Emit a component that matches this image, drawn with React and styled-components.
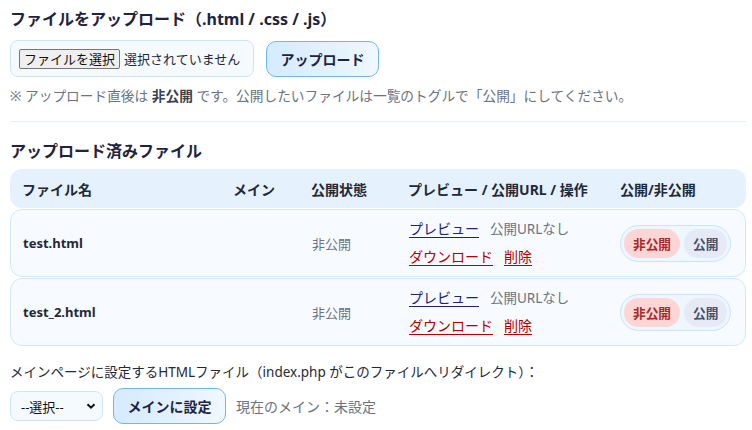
import React from "react";
import styled, { createGlobalStyle } from "styled-components";

const Global = createGlobalStyle`
  html, body { margin: 0; padding: 0; background: #fff; }
  body {
    font-family: "Noto Sans", "Noto Sans CJK JP", sans-serif;
    color: #1f2937;
  }
  * { box-sizing: border-box; }
`;

const Page = styled.div`
  padding: 7px 6px 0 10px;
  width: 752px;
`;

const Title = styled.h2`
  margin: 0;
  font-size: 16px;
  line-height: 24px;
  font-weight: 700;
  color: #1e2440;
`;

const SubTitle = styled.h3`
  margin: 0;
  font-size: 16px;
  line-height: 22px;
  font-weight: 700;
  color: #1e2440;
`;

const Row = styled.div`
  display: flex;
  align-items: center;
  gap: ${(p) => p.$gap || 12}px;
  margin-top: ${(p) => p.$mt || 0}px;
`;

const FileBox = styled.div`
  width: 244px;
  height: 37px;
  border: 1px solid #cde4fb;
  border-radius: 8px;
  background: #f5faff;
  display: flex;
  align-items: center;
  padding: 0 8px;
  gap: 4px;
  font-size: 13px;
  color: #1f2937;
`;

const NativeBtn = styled.span`
  display: inline-flex;
  align-items: center;
  height: 20px;
  padding: 0 4px;
  border: 1px solid #767676;
  border-radius: 2px;
  background: #efefef;
  font-size: 13px;
  color: #111;
`;

const PrimaryBtn = styled.button`
  height: ${(p) => p.$h || 36}px;
  width: ${(p) => p.$w}px;
  border: 1px solid #74b4f2;
  border-radius: 10px;
  background: linear-gradient(90deg, #d5ebff 0%, #e6f3ff 70%, #f1f8ff 100%);
  font-family: inherit;
  font-size: 14px;
  font-weight: 700;
  color: #1e2440;
  cursor: pointer;
`;

const Note = styled.p`
  margin: 10px 0 0;
  font-size: 13.7px;
  line-height: 18px;
  color: #6b7280;
  strong { color: #374151; font-weight: 700; }
`;

const Divider = styled.hr`
  border: 0;
  border-top: 1px solid #e2eefb;
  margin: 16px 0 18px;
  width: 736px;
`;

const Table = styled.div`
  margin-top: 7px;
  width: 736px;
  display: flex;
  flex-direction: column;
  gap: 1px;
`;

const cols = "211px 78px 97px 212px 1fr";

const HeadRow = styled.div`
  display: grid;
  grid-template-columns: ${cols};
  align-items: center;
  height: 39px;
  background: #e6f1fe;
  border-radius: 12px;
  font-size: 14px;
  font-weight: 700;
  color: #1e2440;
`;

const BodyRow = styled.div`
  display: grid;
  grid-template-columns: ${cols};
  align-items: center;
  height: 68px;
  background: #f7fbff;
  border: 1px solid #d3e7fb;
  border-radius: 12px;
  font-size: 13px;
`;

const Cell = styled.div`
  padding: 0 12px;
  color: ${(p) => (p.$muted ? "#6b7280" : "#1f2937")};
  font-weight: ${(p) => (p.$bold ? 700 : 400)};
`;

const Actions = styled.div`
  padding: 0 12px;
  display: flex;
  flex-direction: column;
  gap: 6px;
  font-size: 14px;
  line-height: 22px;
`;

const ActionLine = styled.div`
  display: flex;
  gap: 11px;
  align-items: center;
`;

const Link = styled.a`
  color: ${(p) => (p.$danger ? "#b00000" : "#1c2378")};
  text-decoration: underline;
  text-underline-offset: 3px;
  cursor: pointer;
`;

const Muted = styled.span`
  color: #6b7280;
  font-size: 13.5px;
`;

const Toggle = styled.div`
  margin-left: -1px;
  display: inline-flex;
  align-items: center;
  gap: 4px;
  padding: 3px;
  border: 1px solid #cbe3fb;
  border-radius: 999px;
  background: #eef6ff;
`;

const Pill = styled.span`
  display: inline-flex;
  align-items: center;
  justify-content: center;
  height: 29px;
  padding: 0 9px;
  border-radius: 999px;
  font-size: 12.7px;
  font-weight: 700;
  background: ${(p) => (p.$on ? "#fdd5d5" : "#e6eaf7")};
  color: ${(p) => (p.$on ? "#a52a2a" : "#4a4f6a")};
`;

const Label = styled.p`
  margin: 16px 0 0;
  font-size: 13.5px;
  line-height: 20px;
  color: #1f2937;
`;

const SelectBox = styled.div`
  width: 93px;
  height: 30px;
  border: 1px solid #cde4fb;
  border-radius: 8px;
  background: #f5faff;
  display: flex;
  align-items: center;
  justify-content: space-between;
  padding: 0 6px 0 10px;
  font-size: 13px;
  color: #111;
`;

const Current = styled.span`
  font-size: 14px;
  color: #6b7280;
`;

const files = ["test.html", "test_2.html"];

export default function App() {
  return (
    <>
      <Global />
      <Page>
        <Title>ファイルをアップロード（.html / .css / .js）</Title>
        <Row $mt={9} $gap={12}>
          <FileBox>
            <NativeBtn>ファイルを選択</NativeBtn>
            <span>選択されていません</span>
          </FileBox>
          <PrimaryBtn $w={113}>アップロード</PrimaryBtn>
        </Row>
        <Note>
          ※ アップロード直後は <strong>非公開</strong> です。公開したいファイルは一覧のトグルで「公開」にしてください。
        </Note>
        <Divider />
        <SubTitle>アップロード済みファイル</SubTitle>
        <Table>
          <HeadRow>
            <Cell $bold>ファイル名</Cell>
            <Cell $bold>メイン</Cell>
            <Cell $bold>公開状態</Cell>
            <Cell $bold>プレビュー / 公開URL / 操作</Cell>
            <Cell $bold>公開/非公開</Cell>
          </HeadRow>
          {files.map((f) => (
            <BodyRow key={f}>
              <Cell $bold>{f}</Cell>
              <Cell />
              <Cell $muted>非公開</Cell>
              <Actions>
                <ActionLine>
                  <Link>プレビュー</Link>
                  <Muted>公開URLなし</Muted>
                </ActionLine>
                <ActionLine>
                  <Link $danger>ダウンロード</Link>
                  <Link $danger>削除</Link>
                </ActionLine>
              </Actions>
              <Cell>
                <Toggle>
                  <Pill $on>非公開</Pill>
                  <Pill>公開</Pill>
                </Toggle>
              </Cell>
            </BodyRow>
          ))}
        </Table>
        <Label>メインページに設定するHTMLファイル（index.php がこのファイルへリダイレクト）：</Label>
        <Row $mt={6} $gap={10}>
          <SelectBox>
            <span>--選択--</span>
            <svg width="10" height="10" viewBox="0 0 10 10">
              <path d="M1.5 3.2 L5 6.7 L8.5 3.2" stroke="#111" strokeWidth="2" fill="none" />
            </svg>
          </SelectBox>
          <PrimaryBtn $w={113} $h={36}>メインに設定</PrimaryBtn>
          <Current>現在のメイン：未設定</Current>
        </Row>
      </Page>
    </>
  );
}
